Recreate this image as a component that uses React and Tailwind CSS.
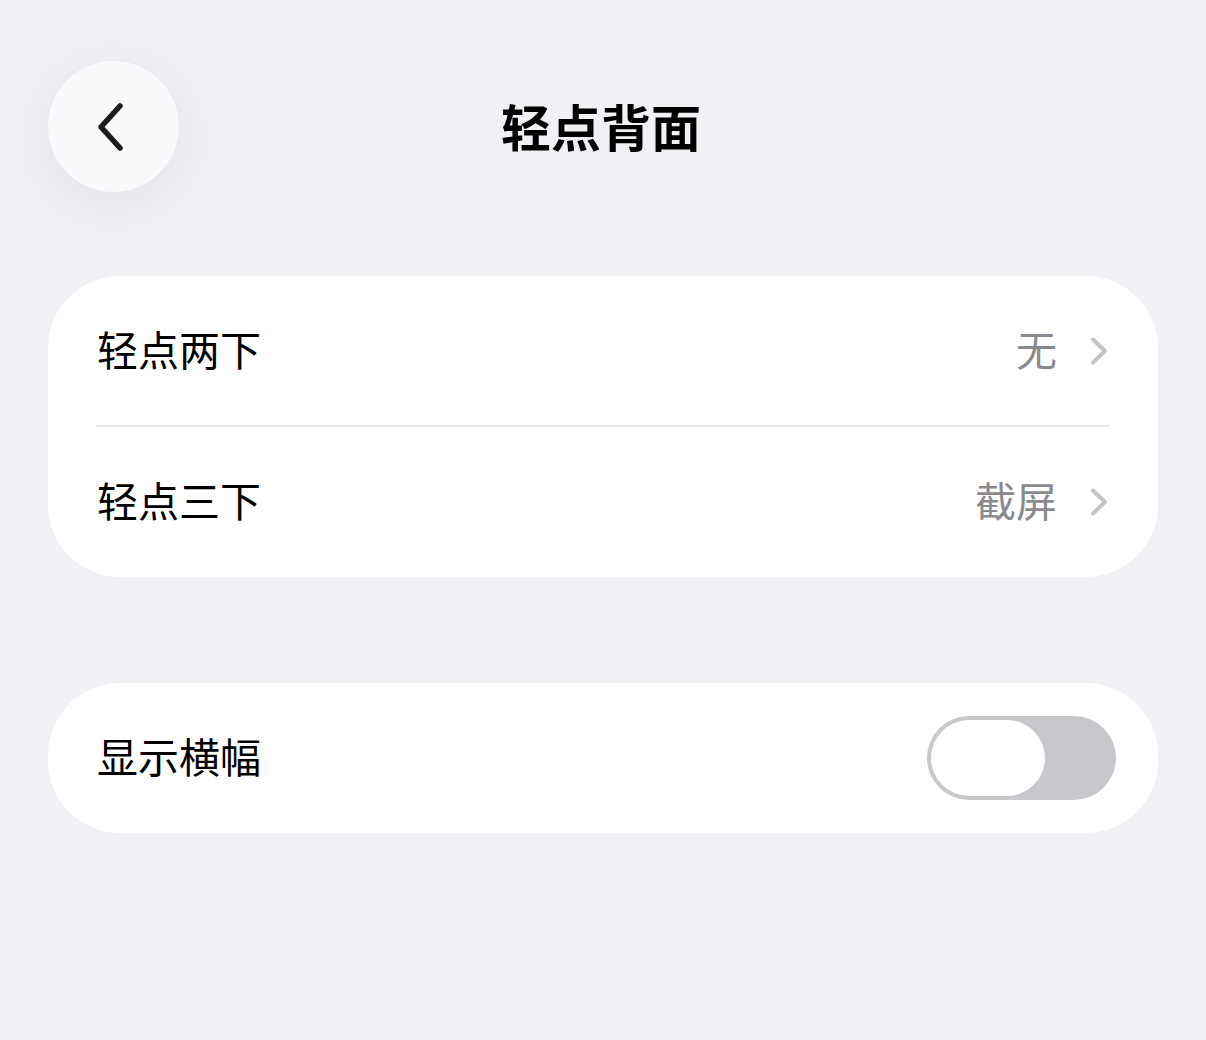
const font = { fontFamily: '"Noto Sans CJK SC", "Noto Sans", sans-serif' }

function Chevron() {
  return (
    <svg width="20" height="30" viewBox="0 0 20 30" fill="none" className="shrink-0">
      <path d="M4 3.5 L16 15 L4 26.5" stroke="#c4c4c7" strokeWidth="4" strokeLinecap="round" strokeLinejoin="round" />
    </svg>
  )
}

function BackIcon() {
  return (
    <svg width="34" height="52" viewBox="0 0 34 52" fill="none">
      <path d="M26 5 L7 26 L26 47" stroke="#1c1c1e" strokeWidth="5.5" strokeLinecap="round" strokeLinejoin="round" />
    </svg>
  )
}

function LinkRow({ label, value, height }) {
  return (
    <div className={`flex items-center justify-between pl-[49px] pr-[49px] ${height}`}>
      <span className="pb-[5px] text-[41px] leading-none text-black">{label}</span>
      <div className="flex items-center gap-[32px]">
        <span className="pb-[5px] text-[41px] leading-none text-[#8a8a8e]">{value}</span>
        <Chevron />
      </div>
    </div>
  )
}

function Toggle() {
  return (
    <div className="flex h-[84px] w-[189px] items-center rounded-full bg-[#c7c7cc] p-[4px]">
      <div className="h-[76px] w-[114px] rounded-full bg-white" />
    </div>
  )
}

export default function App() {
  return (
    <div className="min-h-[1040px] w-full bg-[#f0f0f5] px-[48px] pt-[61px]" style={font}>
      <div className="grid grid-cols-[131px_1fr_131px] items-center">
        <button
          type="button"
          className="flex h-[131px] w-[131px] items-center justify-center rounded-full bg-[#fafafd] pr-[6px] shadow-[0_10px_60px_rgba(0,0,0,0.06)]"
          aria-label="Back"
        >
          <BackIcon />
        </button>
        <h1 className="pr-[4px] pb-[4px] text-center text-[50px] font-bold leading-none text-black">轻点背面</h1>
        <div />
      </div>

      <div className="mt-[84px] overflow-hidden rounded-[72px] bg-white">
        <LinkRow label="轻点两下" value="无" height="h-[149px]" />
        <div className="mx-[48px] h-[2px] bg-[#e5e5ea]" />
        <LinkRow label="轻点三下" value="截屏" height="h-[150px]" />
      </div>

      <div className="mt-[106px] flex h-[150px] items-center justify-between rounded-[72px] bg-white pl-[49px] pr-[42px]">
        <span className="pb-[5px] text-[41px] leading-none text-black">显示横幅</span>
        <Toggle />
      </div>
    </div>
  )
}
